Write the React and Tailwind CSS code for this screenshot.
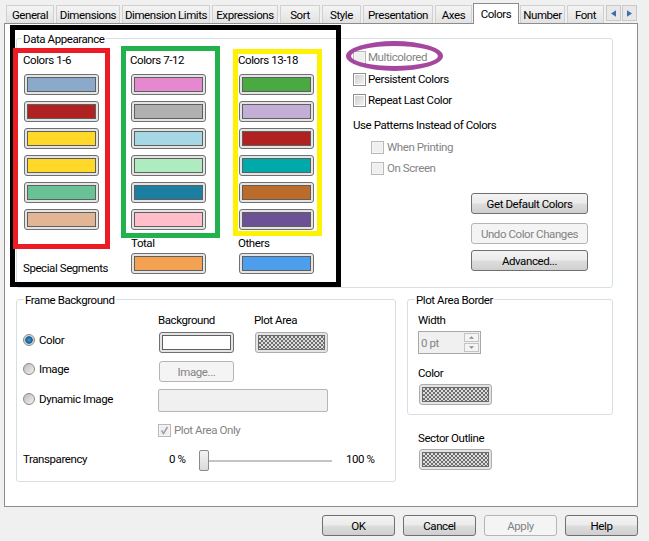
import React from "react";

const tabs = [
  ["General", "w-[48px]"],
  ["Dimensions", "w-[64px]"],
  ["Dimension Limits", "w-[88px]"],
  ["Expressions", "w-[66px]"],
  ["Sort", "w-[40px]"],
  ["Style", "w-[39px]"],
  ["Presentation", "w-[70px]"],
  ["Axes", "w-[37px]"],
];

const col1 = ["bg-[#8aa9cb]", "bg-[#b02222]", "bg-[#ffd82a]", "bg-[#ffd82a]", "bg-[#68c296]", "bg-[#e2b594]"];
const col2 = ["bg-[#e688cf]", "bg-[#b0b0b0]", "bg-[#a6d7e4]", "bg-[#aeebbe]", "bg-[#1c7fa1]", "bg-[#ffbeca]"];
const col3 = ["bg-[#4aa941]", "bg-[#c3aed5]", "bg-[#b02222]", "bg-[#00aaaa]", "bg-[#bb6c2b]", "bg-[#6a5294]"];

const checker = "bg-[repeating-conic-gradient(#6e6e6e_0_25%,#dcdcdc_0_50%)] bg-[length:4px_4px]";

function Swatch({ color, light, w = "w-[75px]" }) {
  return (
    <div className={`${w} h-[21px] shrink-0 rounded-[3px] border ${light ? "border-[#acacac]" : "border-[#707070]"} bg-[#e4e4e4] p-[2px]`}>
      <div className={`h-full w-full border ${light ? "border-[#6a6a6a]" : "border-[#5f5f5f]"} ${color}`} />
    </div>
  );
}

function Btn({ children, disabled, w = "w-[117px]" }) {
  return (
    <div
      className={`${w} h-[21px] shrink-0 rounded-[3px] border flex items-center justify-center ${
        disabled
          ? "border-[#b5b5b5] bg-[#f4f4f4] text-[#838383]"
          : "border-[#707070] bg-[linear-gradient(#f3f3f3_0%,#ebebeb_48%,#dddddd_52%,#cfcfcf_100%)] text-black"
      }`}
    >
      {children}
    </div>
  );
}

function Check({ checked, disabled }) {
  return (
    <div
      className={`w-[13px] h-[13px] shrink-0 border p-[1px] ${
        disabled ? "border-[#b9b9b9] bg-[#f4f4f4]" : "border-[#8e8f8f] bg-white"
      }`}
    >
      <div className={`w-full h-full ${disabled ? "bg-[#efefef]" : "bg-[linear-gradient(135deg,#cfcfcf,#f2f2f2)]"}`}>
        {checked && (
          <svg viewBox="0 0 9 9" className="w-full h-full">
            <path d="M1.5 4.5 L3.5 7.5 L7.5 1" fill="none" stroke="#a0a0a0" strokeWidth="1.5" />
          </svg>
        )}
      </div>
    </div>
  );
}

function Option({ children, disabled, checked, className = "", gap = "gap-[2px]" }) {
  return (
    <div className={`flex items-center h-[16px] ${gap} ${disabled ? "text-[#838383]" : ""} ${className}`}>
      <Check disabled={disabled} checked={checked} />
      <span>{children}</span>
    </div>
  );
}

function Radio({ selected, children }) {
  return (
    <div className="flex items-center h-[16px] gap-[4px] w-[136px] shrink-0">
      <div
        className={`w-[12px] h-[12px] rounded-full border border-[#8a8a8a] ${
          selected
            ? "bg-[radial-gradient(circle,#3e9ad6_0%,#155a92_48%,#d4d4d4_58%,#ececec_100%)]"
            : "bg-[linear-gradient(135deg,#bcbcbc,#f2f2f2)]"
        }`}
      />
      <span>{children}</span>
    </div>
  );
}

function Group({ title, className = "", titleClass = "left-[7px]", children }) {
  return (
    <div className={`relative rounded-[3px] border border-[#d5dfe5] ${className}`}>
      <div className={`absolute -top-[8px] h-[16px] leading-[16px] bg-white px-[1px] ${titleClass}`}>{title}</div>
      {children}
    </div>
  );
}

function ColorColumn({ title, colors, w }) {
  return (
    <div className={`${w} shrink-0`}>
      <div className="h-[16px] leading-[16px] -ml-[1px] mb-[6px]">{title}</div>
      <div className="flex flex-col gap-[6px]">
        {colors.map((c, i) => (
          <Swatch key={i} color={c} />
        ))}
      </div>
    </div>
  );
}

function Box({ className }) {
  return <div className={`absolute pointer-events-none ${className}`} />;
}

export default function App() {
  return (
    <div className="relative w-[649px] h-[541px] overflow-hidden flex bg-[#e6f1f8] font-['Roboto',sans-serif] text-[11.5px] tracking-[-0.42px] leading-[16px] text-black">
      <div className="w-[645px] h-full shrink-0 bg-[#f0f0f0] border-r border-[#8a8a8a] pl-[4px] box-content">
        {/* tabs */}
        <div className="h-[23px] pl-[2px] flex items-end gap-[2px]">
          {tabs.map(([t, w]) => (
            <div
              key={t}
              className={`${w} h-[18px] shrink-0 flex items-center justify-center whitespace-nowrap border border-b-0 border-[#d0d0d0] bg-[linear-gradient(#f4f4f4,#e2e2e2)]`}
            >
              {t}
            </div>
          ))}
          <div className="relative z-10 -mb-px -mx-[1px] w-[46px] h-[21px] shrink-0 flex items-start justify-center pt-[2px] border border-b-0 border-[#8c8c8c] bg-white">
            Colors
          </div>
          <div className="w-[45px] h-[18px] shrink-0 flex items-center justify-center border border-b-0 border-[#d0d0d0] bg-[linear-gradient(#f4f4f4,#e2e2e2)]">
            Number
          </div>
          <div className="w-[37px] h-[18px] shrink-0 flex items-center justify-center border border-b-0 border-[#d0d0d0] bg-[linear-gradient(#f4f4f4,#e2e2e2)]">
            Font
          </div>
          <div className="flex gap-[1px] self-start mt-[5px]">
            <div className="w-[15px] h-[16px] border border-[#c8c8c8] bg-[#e8e8e8] flex items-center justify-center">
              <svg viewBox="0 0 6 8" className="w-[5px] h-[7px]"><polygon points="6,0 6,8 0,4" fill="#3f6fa8" /></svg>
            </div>
            <div className="w-[15px] h-[16px] border border-[#c8c8c8] bg-[#e8e8e8] flex items-center justify-center">
              <svg viewBox="0 0 6 8" className="w-[5px] h-[7px]"><polygon points="0,0 0,8 6,4" fill="#3f6fa8" /></svg>
            </div>
          </div>
        </div>

        {/* panel */}
        <div className="w-[634px] h-[484px] border border-[#8c8c8c] bg-white pl-[11px] pt-[14px]">
          <Group title="Data Appearance" className="w-[597px] h-[250px] pl-[7px] pt-[13px] flex" titleClass="left-[5px]">
            <div className="shrink-0">
              <div className="flex">
                <ColorColumn title="Colors 1-6" colors={col1} w="w-[107px]" />
                <ColorColumn title="Colors 7-12" colors={col2} w="w-[108px]" />
                <ColorColumn title="Colors 13-18" colors={col3} w="w-[75px]" />
              </div>
              <div className="flex">
                <div className="w-[107px] shrink-0 mt-[30px] h-[16px] whitespace-nowrap">
                  <div className="-ml-px">Special Segments</div>
                </div>
                <div className="w-[108px] shrink-0 mt-[5px]">
                  <div className="h-[16px] mb-[2px]">Total</div>
                  <Swatch color="bg-[#f2a250]" />
                </div>
                <div className="w-[75px] shrink-0 mt-[5px]">
                  <div className="h-[16px] mb-[2px] -ml-px">Others</div>
                  <Swatch color="bg-[#4d9eed]" />
                </div>
              </div>
            </div>
            <div className="w-[235px] ml-[39px] -mt-[3px] flex flex-col">
              <Option disabled className="">Multicolored</Option>
              <Option className="mt-[6px]">Persistent Colors</Option>
              <Option className="mt-[5px]">Repeat Last Color</Option>
              <div className="h-[16px] mt-[9px]">Use Patterns Instead of Colors</div>
              <Option disabled className="mt-[6px] ml-[18px]" gap="gap-[3px]">When Printing</Option>
              <Option disabled className="mt-[5px] ml-[18px]" gap="gap-[3px]">On Screen</Option>
              <div className="self-end mt-[17px]"><Btn>Get Default Colors</Btn></div>
              <div className="self-end mt-[9px]"><Btn disabled>Undo Color Changes</Btn></div>
              <div className="self-end mt-[6px]"><Btn>Advanced...</Btn></div>
            </div>
          </Group>

          <div className="flex gap-[11px] mt-[11px]">
            <Group title="Frame Background" className="w-[380px] h-[183px] pl-[6px] pt-[12px]">
              <div className="flex h-[16px]">
                <div className="w-[135px] shrink-0" />
                <div className="w-[96px] shrink-0">Background</div>
                <div>Plot Area</div>
              </div>
              <div className="flex mt-[4px]">
                <Radio selected>Color</Radio>
                <Swatch color="bg-white" />
                <div className="ml-[21px]"><Swatch color={checker} light w="w-[73px]" /></div>
              </div>
              <div className="flex mt-[8px]">
                <Radio>Image</Radio>
                <Btn disabled w="w-[75px]">Image...</Btn>
              </div>
              <div className="flex mt-[7px]">
                <div className="mt-[2px]"><Radio>Dynamic Image</Radio></div>
                <div className="-ml-px w-[170px] h-[23px] rounded-[2px] border border-[#b5b5b5] bg-[#f0f0f0]" />
              </div>
              <div className="flex mt-[10px]">
                <div className="w-[135px] shrink-0" />
                <Option disabled checked gap="gap-[3px]">Plot Area Only</Option>
              </div>
              <div className="flex items-center mt-[12px] h-[21px]">
                <div className="w-[146px] shrink-0 -mt-[3px]">Transparency</div>
                <div className="w-[30px] shrink-0 -mt-[3px]">0 %</div>
                <div className="relative w-[133px] h-[2px] shrink-0 bg-[#c4c4c4]">
                  <div className="absolute left-0 -top-[10px] w-[10px] h-[21px] rounded-[2px] border border-[#8a8a8a] bg-[linear-gradient(#f4f4f4,#dadada)]" />
                </div>
                <div className="ml-[14px] -mt-[3px]">100 %</div>
              </div>
            </Group>

            <div className="w-[206px] shrink-0">
              <Group title="Plot Area Border" className="h-[116px] pl-[10px] pt-[12px]">
                <div className="h-[16px]">Width</div>
                <div className="mt-[3px] w-[63px] h-[23px] border border-[#a8a8a8] bg-[#f0f0f0] flex items-center justify-between pl-[2px] pr-[1px] text-[#838383]">
                  <span>0 pt</span>
                  <div className="flex flex-col gap-px">
                    <div className="w-[15px] h-[9px] border border-[#c4c4c4] bg-[#f4f4f4] flex items-center justify-center">
                      <svg viewBox="0 0 6 3" className="w-[5px] h-[3px]"><polygon points="3,0 6,3 0,3" fill="#8a8a8a" /></svg>
                    </div>
                    <div className="w-[15px] h-[9px] border border-[#c4c4c4] bg-[#f4f4f4] flex items-center justify-center">
                      <svg viewBox="0 0 6 3" className="w-[5px] h-[3px]"><polygon points="0,0 6,0 3,3" fill="#8a8a8a" /></svg>
                    </div>
                  </div>
                </div>
                <div className="h-[16px] mt-[11px]">Color</div>
                <div className="mt-[3px] ml-[1px]"><Swatch color={checker} light w="w-[73px]" /></div>
              </Group>
              <div className="pl-[11px] mt-[15px]">
                <div className="h-[16px]">Sector Outline</div>
                <div className="mt-[3px] ml-[1px]"><Swatch color={checker} light w="w-[73px]" /></div>
              </div>
            </div>
          </div>
        </div>

        {/* footer */}
        <div className="flex gap-[8px] pl-[318px] pt-[8px]">
          <Btn w="w-[73px]">OK</Btn>
          <Btn w="w-[73px]">Cancel</Btn>
          <Btn disabled w="w-[73px]">Apply</Btn>
          <Btn w="w-[73px]">Help</Btn>
        </div>
      </div>

      {/* hand-drawn annotations on top of the screenshot */}
      <Box className="left-[10px] top-[25px] w-[331px] h-[262px] border-[5px] border-black" />
      <Box className="left-[13px] top-[48px] w-[97px] h-[201px] border-[5px] border-[#ed1c24]" />
      <Box className="left-[121px] top-[46px] w-[99px] h-[192px] border-[5px] border-[#22b14c]" />
      <Box className="left-[233px] top-[49px] w-[89px] h-[187px] border-[5px] border-[#fff200]" />
      <Box className="left-[346px] top-[41px] w-[97px] h-[30px] rounded-[50%] border-[5px] border-[#a5479f]" />
    </div>
  );
}
